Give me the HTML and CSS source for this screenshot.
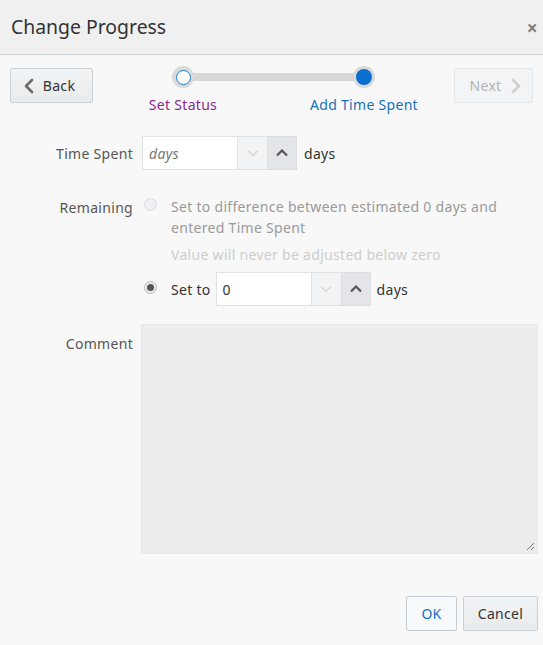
FILE: index.html
```html
<!DOCTYPE html>
<html>
<head>
<meta charset="utf-8">
<link rel="stylesheet" href="styles.css">
</head>
<body>
<div class="dialog">
  <header class="hdr">
    <h1 class="title">Change Progress</h1>
    <span class="close">&times;</span>
  </header>

  <div class="train-row">
    <button class="btn back"><svg class="chev" width="10" height="16" viewBox="0 0 10 16"><polyline points="8,2 2,8 8,14" fill="none" stroke="#6b6b6b" stroke-width="2.6" stroke-linecap="round" stroke-linejoin="round"/></svg>Back</button>
    <div class="train">
      <div class="train-line"></div>
      <div class="stop">
        <span class="dot visited"></span>
        <span class="stop-lbl purple">Set Status</span>
      </div>
      <div class="stop">
        <span class="dot current"></span>
        <span class="stop-lbl blue">Add Time Spent</span>
      </div>
    </div>
    <button class="btn next" disabled>Next<svg class="chev" width="10" height="16" viewBox="0 0 10 16"><polyline points="2,2 8,8 2,14" fill="none" stroke="#cfcfcf" stroke-width="2.6" stroke-linecap="round" stroke-linejoin="round"/></svg></button>
  </div>

  <div class="form">
    <div class="row r-time">
      <label class="lbl">Time Spent</label>
      <div class="ctrl inline">
        <div class="spin">
          <span class="spin-input placeholder">days</span>
          <span class="spin-btn down"><svg width="12" height="8" viewBox="0 0 12 8"><polyline points="1,1.5 6,6.5 11,1.5" fill="none" stroke="#d4d6d8" stroke-width="1.4"/></svg></span>
          <span class="spin-btn up"><svg width="12" height="8" viewBox="0 0 12 8"><polyline points="1,6.5 6,1.5 11,6.5" fill="none" stroke="#555" stroke-width="2.2"/></svg></span>
        </div>
        <span class="unit">days</span>
      </div>
    </div>

    <div class="row r-remain">
      <label class="lbl">Remaining</label>
      <div class="ctrl">
        <div class="opt">
          <span class="radio disabled"></span>
          <div class="opt-text disabled-text">Set to difference between estimated 0 days and entered Time Spent</div>
        </div>
        <div class="hint">Value will never be adjusted below zero</div>
        <div class="opt opt2">
          <span class="radio checked"></span>
          <span class="setto">Set to</span>
          <div class="spin">
            <span class="spin-input">0</span>
            <span class="spin-btn down"><svg width="12" height="8" viewBox="0 0 12 8"><polyline points="1,1.5 6,6.5 11,1.5" fill="none" stroke="#d4d6d8" stroke-width="1.4"/></svg></span>
            <span class="spin-btn up"><svg width="12" height="8" viewBox="0 0 12 8"><polyline points="1,6.5 6,1.5 11,6.5" fill="none" stroke="#555" stroke-width="2.2"/></svg></span>
          </div>
          <span class="unit">days</span>
        </div>
      </div>
    </div>

    <div class="row r-comment">
      <label class="lbl lbl-top">Comment</label>
      <div class="ctrl">
        <div class="textarea"><svg class="grip" width="10" height="10" viewBox="0 0 10 10"><line x1="9" y1="2" x2="2" y2="9" stroke="#777" stroke-width="1"/><line x1="9" y1="6" x2="6" y2="9" stroke="#777" stroke-width="1"/></svg></div>
      </div>
    </div>
  </div>

  <footer class="foot">
    <button class="btn ok">OK</button>
    <button class="btn cancel">Cancel</button>
  </footer>
</div>
</body>
</html>
```

FILE: styles.css
```css
* { box-sizing: border-box; }
html, body {
  margin: 0;
  padding: 0;
  background: #f8f8f8;
  font-family: "Noto Sans", "Open Sans", sans-serif;
  font-size: 14px;
  letter-spacing: 0.3px;
  color: #333;
}
.dialog {
  width: 543px;
  height: 645px;
  display: flex;
  flex-direction: column;
}
.hdr {
  height: 55px;
  background: #f0f0f0;
  border-bottom: 1px solid #c9d1d8;
  display: flex;
  align-items: center;
  justify-content: space-between;
  padding: 0 5px 0 11px;
}
.title {
  margin: 0;
  font-size: 19.4px;
  font-weight: 400;
  letter-spacing: 0;
  color: #333;
  line-height: 24px;
  padding-bottom: 1px;
}
.close {
  font-size: 19px;
  color: #808080;
  font-weight: 700;
  line-height: 20px;
  padding-top: 2px;
}
.btn {
  font-family: "Noto Sans", "Open Sans", sans-serif;
  font-size: 14px;
  letter-spacing: 0.3px;
  height: 35px;
  border: 1px solid #c9d1d8;
  border-radius: 2px;
  background: linear-gradient(#f2f4f5, #e8eaec);
  color: #333;
  display: flex;
  align-items: center;
  justify-content: center;
  padding: 0;
  cursor: default;
}
.train-row {
  display: flex;
  justify-content: space-between;
  align-items: flex-start;
  padding: 13px 10px 0 10px;
}
.back {
  width: 83px;
  gap: 9px;
  padding-right: 4px;
}
.next {
  width: 79px;
  gap: 10px;
  color: #b3b3b3;
  background: #f3f4f5;
  border-color: #e3e6e9;
  padding-left: 4px;
}
.train {
  width: 301px;
  display: flex;
  justify-content: space-between;
  position: relative;
  margin-top: -2px;
}
.train-line {
  position: absolute;
  left: 60px;
  right: 60px;
  top: 7px;
  height: 8px;
  background: #d7d7d7;
}
.stop {
  width: 120px;
  display: flex;
  flex-direction: column;
  align-items: center;
  position: relative;
}
.dot {
  width: 22px;
  height: 22px;
  border-radius: 50%;
  background: #dadada;
  display: flex;
  align-items: center;
  justify-content: center;
}
.dot::after {
  content: "";
  width: 15px;
  height: 15px;
  border-radius: 50%;
  box-sizing: border-box;
}
.dot.visited::after {
  background: #fff;
  border: 1.5px solid #1a7ed8;
}
.dot.current::after {
  background: #0a6fd1;
  width: 16px;
  height: 16px;
}
.stop-lbl {
  margin-top: 7px;
  line-height: 20px;
  white-space: nowrap;
}
.purple { color: #8a2a93; }
.blue { color: #1770b8; }

.form {
  display: flex;
  flex-direction: column;
}
.row {
  display: flex;
  align-items: flex-start;
}
.lbl {
  width: 133px;
  text-align: right;
  color: #555;
  flex: none;
}
.ctrl {
  margin-left: 8px;
}
.inline {
  display: flex;
  align-items: center;
  gap: 7px;
}
.r-time {
  margin-top: 21px;
  align-items: center;
}
.r-time .lbl { padding-top: 1px; }
.r-time .ctrl { margin-left: 9px; }
.spin {
  display: flex;
  height: 34px;
}
.spin-input {
  width: 95px;
  background: #fff;
  border: 1px solid #e0e3e6;
  border-right: none;
  display: flex;
  align-items: center;
  padding-left: 6px;
  color: #333;
}
.placeholder {
  font-style: italic;
  color: #777;
}
.spin-btn {
  width: 30px;
  display: flex;
  align-items: center;
  justify-content: center;
  border: 1px solid #e0e3e6;
}
.spin-btn.down {
  background: #f2f3f4;
  border-right: none;
}
.spin-btn.up {
  background: #e3e5e8;
  border-color: #dcdfe2;
}
.unit { color: #333; }

.r-remain {
  margin-top: 26px;
}
.r-remain .lbl {
  line-height: 21px;
  padding-top: 1px;
}
.r-remain .ctrl {
  margin-left: 11px;
  width: 380px;
}
.opt {
  display: flex;
  align-items: flex-start;
}
.radio {
  flex: none;
  width: 13px;
  height: 13px;
  border-radius: 50%;
  border: 1px solid #d9dbdd;
  background: #eef0f1;
  margin-top: 2px;
  display: flex;
  align-items: center;
  justify-content: center;
}
.radio.checked {
  border-color: #b9bcbf;
  background: #e9ebed;
}
.radio.checked::after {
  content: "";
  width: 7px;
  height: 7px;
  border-radius: 50%;
  background: #555;
}
.opt-text {
  margin-left: 14px;
  line-height: 21px;
}
.disabled-text { color: #9a9a9a; }
.hint {
  margin: 6px 0 0 27px;
  line-height: 21px;
  color: #cdcdcd;
}
.opt2 {
  margin-top: 7px;
  align-items: center;
}
.opt2 .radio { margin-top: -4px; }
.setto {
  margin: 0 5px 0 14px;
  color: #333;
}
.opt2 .unit { margin-left: 6px; }

.r-comment {
  margin-top: 18px;
}
.lbl-top {
  padding-top: 10px;
  line-height: 20px;
}
.r-comment .ctrl { margin-left: 8px; }
.textarea {
  width: 397px;
  height: 230px;
  background: #ededee;
  border: 1px solid #e6e6e7;
  display: flex;
  align-items: flex-end;
  justify-content: flex-end;
  padding: 0 2px 2px 0;
}

.foot {
  margin-top: auto;
  margin-bottom: 14px;
  display: flex;
  justify-content: flex-end;
  gap: 6px;
  padding-right: 5px;
}
.ok {
  width: 51px;
  color: #0f72c4;
  background: #f7f9fb;
  border-color: #c3ccd4;
}
.cancel {
  width: 75px;
}
```
